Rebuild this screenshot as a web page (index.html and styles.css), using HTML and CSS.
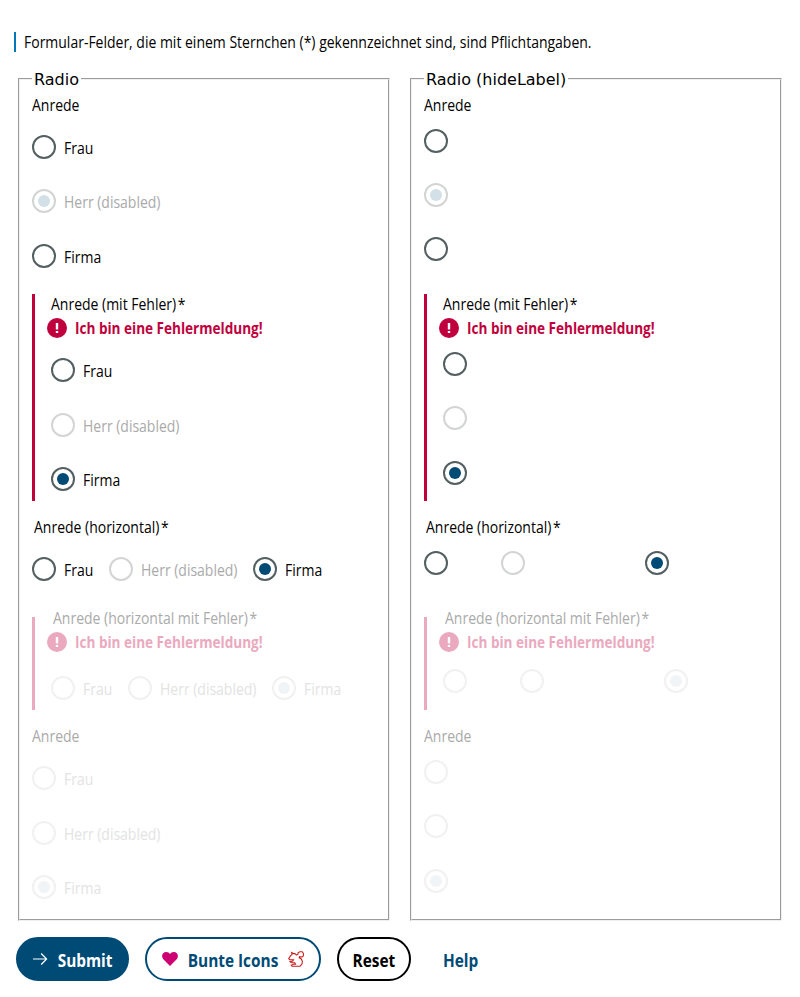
FILE: index.html
```html
<!DOCTYPE html>
<html lang="de">
<head>
<meta charset="utf-8">
<title>Radio</title>
<link rel="stylesheet" href="styles.css">
<script src="form.js" defer></script>
</head>
<body>
<form class="form">
  <p class="hint"><span class="text">Formular-Felder, die mit einem Sternchen (*) gekennzeichnet sind, sind Pflichtangaben.</span></p>
  <div class="columns">
    <fieldset class="panel"><legend>Radio</legend></fieldset>
    <fieldset class="panel hide-label"><legend>Radio (hideLabel)</legend></fieldset>
  </div>
  <div class="actions">
    <button type="button" class="btn primary"><svg class="arrow" viewBox="0 0 16 16"><path d="M1 8H14.2M9.2 2.5L14.6 8L9.2 13.5"/></svg><span>Submit</span></button>
    <button type="button" class="btn secondary"><svg class="heart" viewBox="0 0 16 16"><path d="M8 15L1.3 8.3C-1.2 5.4.4 1 4.2 1C6 1 7.2 1.8 8 3C8.800 1.8 10 1 11.800 1C15.600 1 17.200 5.400 14.700 8.300Z"/></svg><span>Bunte Icons</span><svg class="squirrel" viewBox="0 0 16 16"><path d="M4.200 3.200L3.600 1.600L5.500 2.600L7 2.500L8.300 4L10 3.200V1.800L11.800.8H14.200L15.400 2.500V4.800L14.200 6L11.500 5.600L11.200 6.800L13.500 8.200L14.400 10.500L14 13L12 15.200H4L3.300 14.200L5.500 13.200H7.500L6.800 11.800H3.200L2 10.600L4.800 10L5.500 8.800L1.800 8.700L.7 7.600L2.300 5.200Z"/></svg></button>
    <button type="button" class="btn reset"><span>Reset</span></button>
    <button type="button" class="btn ghost"><span>Help</span></button>
  </div>
</form>
</body>
</html>
```
FILE: styles.css
```css
* { box-sizing: border-box; }
body { margin: 0; background: #fff; color: #000; font: 16px/20px "Open Sans", "Noto Sans", sans-serif; }
.form { padding: 32px 14px 0; }
.text { display: inline-block; transform: scaleX(.874); transform-origin: left; white-space: nowrap; }
.hint { margin: 0; height: 20px; border-left: 2px solid #0077b6; padding-left: 8px; line-height: 21px; }
.columns { display: grid; grid-template-columns: 372px 372px; gap: 20px; margin: 17px 0 0 4px; }
.panel { margin: 0; height: 852px; min-width: 0; border: 2px groove #f0f0f0; padding: 5px 12px 0; }
.panel legend { padding: 0 2px; font: 16px/22px "DejaVu Sans", sans-serif; height: 20px; }
.group { display: flex; flex-direction: column; align-items: flex-start; }
.group-label { height: 20px; line-height: 21px; white-space: nowrap; }
.star { margin-left: 2px; }
.g1 { height: 200px; padding-top: 1px; --top: 20px; }
.g2 { height: 207px; --top: 20.3px; }
.g3 { height: 116px; padding-top: 16.4px; --top: 19.6px; }
.g4 { height: 93px; --top: 24px; }
.g4 > .group-label { margin-top: -9px; }
.g3 > .group-label, .g4 > .group-label { padding-left: 2px; }
.g5 { padding-top: 16px; --top: 20.3px; }
.has-error { border-left: 3px solid #c0003c; padding-left: 16px; }
.radios { display: grid; grid-auto-rows: 54.4px; margin-top: var(--top); }
.hide-label .radios { margin-top: calc(var(--top) - 6.4px); }
.hide-label .g3 .radios { margin-top: 13.6px; }
.hide-label .g4 .radios { margin-top: 17px; }
.horizontal { grid-template-columns: 77px 144px 100px; grid-auto-rows: 24px; }
.radio { display: flex; gap: 8px; height: 24px; white-space: nowrap; line-height: 27px; }
.circle { flex: none; display: grid; place-items: center; width: 24px; height: 24px; border: 2px solid #535f61; border-radius: 50%; }
.checked .circle::after { content: ""; width: 12px; height: 12px; border-radius: 50%; background: #004b76; }
.disabled { color: #aaa; }
.disabled .circle { border-color: #d3d5d5; }
.disabled.checked .circle::after { background: #d3e0e8; }
.error { display: flex; align-items: center; gap: 8px; height: 20px; margin: 4px 0 0 -4px; color: #c0003c; font-weight: 700; }
.error .text { transform: scaleX(.847); }
.error svg { width: 20px; height: 20px; }
.muted .group-label { color: #aaa; }
.muted .disabled { color: #e3e3e3; }
.muted .disabled .circle { border-color: #f1f1f1; }
.muted .disabled.checked .circle::after { background: #f0f4f7; }
.muted.has-error { border-color: #eaa9be; }
.muted .error { color: #eaa9be; }
.actions { display: flex; gap: 16px; margin: 16px 0 0 2px; }
.btn { display: flex; align-items: center; justify-content: center; height: 44px; padding: 0; border: 2px solid #004b76; border-radius: 22px; background: #fff; color: #004b76; font: 700 18px/26px "Open Sans", sans-serif; white-space: nowrap; }
.btn span { transform: scaleX(.855); padding-top: 1px; }
.primary { width: 113px; gap: 5px; padding-left: 5px; background: #004b76; color: #fff; }
.secondary { width: 176px; gap: 2px; }
.reset { width: 74px; border-color: #000; color: #000; }
.ghost { width: 68px; border-color: transparent; }
.btn svg { flex: none; width: 16px; height: 16px; }
.arrow { fill: none; stroke: currentColor; stroke-width: 1.2; }
.heart { fill: #cd0073; }
.squirrel { fill: none; stroke: #c6201f; stroke-width: 1.1; }
```
FILE: form.js
```js
const groups = [
  { cls: 'g1', label: 'Anrede', checked: 1, disabled: [1] },
  { cls: 'g2 has-error', label: 'Anrede (mit Fehler)', star: true, error: true, checked: 2, disabled: [1] },
  { cls: 'g3', label: 'Anrede (horizontal)', star: true, row: true, checked: 2, disabled: [1] },
  { cls: 'g4 has-error muted', label: 'Anrede (horizontal mit Fehler)', star: true, error: true, row: true, checked: 2, disabled: [0, 1, 2] },
  { cls: 'g5 muted', label: 'Anrede', checked: 2, disabled: [0, 1, 2] }
];
const options = ['Frau', 'Herr (disabled)', 'Firma'];
const errorIcon = '<svg viewBox="0 0 20 20"><circle cx="10" cy="10" r="10" fill="currentColor"/><path d="M10 5v6.500M10 13v2" stroke="#fff" stroke-width="2.4"/></svg>';

document.querySelectorAll('.panel').forEach(panel => {
  const hidden = panel.classList.contains('hide-label');
  const html = groups.map(g => {
    const radios = options.map((o, i) => {
      const state = (g.checked === i ? ' checked' : '') + (g.disabled.includes(i) ? ' disabled' : '');
      return `<label class="radio${state}"><span class="circle"></span>${hidden ? '' : `<span class="text">${o}</span>`}</label>`;
    }).join('');
    return `<div class="group ${g.cls}">
      <div class="group-label"><span class="text">${g.label}${g.star ? '<span class="star">*</span>' : ''}</span></div>
      ${g.error ? `<div class="error">${errorIcon}<span class="text">Ich bin eine Fehlermeldung!</span></div>` : ''}
      <div class="radios${g.row ? ' horizontal' : ''}">${radios}</div>
    </div>`;
  }).join('');
  panel.insertAdjacentHTML('beforeend', html);
});
```
